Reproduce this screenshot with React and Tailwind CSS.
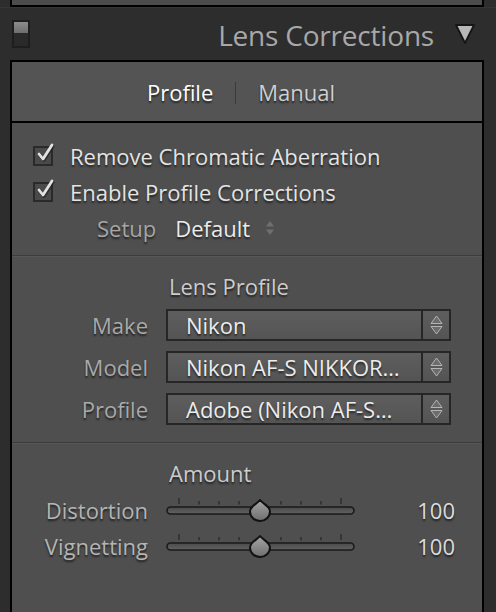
import React from 'react';

const shadow = '[text-shadow:0_2px_2px_rgba(0,0,0,0.6)]';

const Check = () => (
  <div className="relative w-[20px] h-[20px] shrink-0 border-2 border-[#2a2a2a] bg-[#4a4a4a]">
    <svg className="absolute -top-[6px] left-[1px]" width="20" height="22" viewBox="0 0 20 22">
      <path d="M3 12 L7 17 L16 3" fill="none" stroke="#1e1e1e" strokeWidth="3.5" strokeLinecap="round" strokeLinejoin="round" transform="translate(0.8,1.2)" opacity="0.6" />
      <path d="M3 12 L7 17 L16 3" fill="none" stroke="#e2e2e2" strokeWidth="2.8" strokeLinecap="round" strokeLinejoin="round" />
    </svg>
  </div>
);

const Arrows = () => (
  <svg width="13" height="20" viewBox="0 0 13 20">
    <path d="M6.5 1 L12 8.5 L1 8.5 Z" fill="#6c6c6c" stroke="#b4b4b4" strokeWidth="1" strokeLinejoin="round" />
    <path d="M1 11.5 L12 11.5 L6.5 19 Z" fill="#6c6c6c" stroke="#b4b4b4" strokeWidth="1" strokeLinejoin="round" />
  </svg>
);

const Select = ({ label, value }) => (
  <div className="flex items-center h-[42px]">
    <div className={`w-[136px] text-right text-[22px] text-[#a9a9a9] ${shadow}`}>{label}</div>
    <div className="ml-[18px] w-[285px] h-[32px] flex border-2 border-[#262626] bg-gradient-to-b from-[#5e5e5e] to-[#545454]">
      <div className={`flex-1 pl-[18px] flex items-center text-[22px] text-[#ececec] ${shadow} whitespace-nowrap overflow-hidden`}>{value}</div>
      <div className="w-[28px] border-l-2 border-[#262626] flex items-center justify-center">
        <Arrows />
      </div>
    </div>
  </div>
);

const ticks = [13, 33, 53, 73, 115, 135, 155, 175];

const Slider = ({ label, value }) => (
  <div className="flex items-center h-[36px]">
    <div className={`w-[136px] text-right text-[22px] text-[#b4b4b4] ${shadow}`}>{label}</div>
    <svg className="ml-[18px] shrink-0" width="190" height="30" viewBox="0 0 190 30">
      {ticks.map((x) => (
        <rect key={x} x={x - 0.75} y={x === 13 || x === 175 ? 3 : 6} width="1.5" height={x === 13 || x === 175 ? 6 : 3.5} fill="#2e2e2e" />
      ))}
      <defs>
        <linearGradient id="trk" x1="0" y1="0" x2="0" y2="1">
          <stop offset="0" stopColor="#4a4a4a" />
          <stop offset="1" stopColor="#626262" />
        </linearGradient>
        <linearGradient id="thb" x1="0" y1="0" x2="0" y2="1">
          <stop offset="0" stopColor="#a6a6a6" />
          <stop offset="1" stopColor="#6e6e6e" />
        </linearGradient>
      </defs>
      <rect x="1" y="12" width="187" height="7" rx="3.5" fill="url(#trk)" stroke="#1a1a1a" strokeWidth="1.6" />
      <path d="M94 5 C97 9 104 11 104 16.5 A10 9.5 0 0 1 84 16.5 C84 11 91 9 94 5 Z" fill="url(#thb)" stroke="#111" strokeWidth="2" strokeLinejoin="round" />
    </svg>
    <div className={`flex-1 text-right pr-[27px] text-[22px] text-[#dcdcdc] ${shadow}`}>{value}</div>
  </div>
);

const Divider = () => (
  <div>
    <div className="h-[1px] bg-[#3c3c3c]" />
    <div className="h-[1px] bg-[#575757]" />
  </div>
);

export default function App() {
  return (
    <div className="w-[496px] h-[612px] overflow-hidden bg-[#2d2d2d] font-['Open_Sans',sans-serif]">
      <div className="mx-[10px] w-[474px] h-[7px] bg-[#4c4c4c] border-x-2 border-b-2 border-black" />
      <div className="h-[1px] bg-[#363636]" />
      <div className="h-[52px] flex items-center pl-[12px] pr-[20px]">
        <div className="w-[18px] h-[28px] border-2 border-[#1e1e1e] bg-[#2a2a2a] flex flex-col">
          <div className="h-[11px] bg-gradient-to-b from-[#8c8c8c] to-[#6e6e6e]" />
        </div>
        <div className="ml-auto pt-[2px] text-[28px] text-[#a8a8a8] tracking-[-0.2px]">Lens Corrections</div>
        <svg className="ml-[20px]" width="22" height="22" viewBox="0 0 22 22">
          <path d="M2 2 L20 2 L11 20 Z" fill="#b8b8b8" stroke="#151515" strokeWidth="1.8" strokeLinejoin="round" />
        </svg>
      </div>
      <div className="mx-[10px] w-[474px] h-[560px] border-x-2 border-t-2 border-black bg-[#4f4f4f]">
        <div className="h-[61px] bg-[#545454] border-b-2 border-black flex items-center justify-center text-[22px]">
          <div className="flex items-center pr-[12px] pt-[2px]">
            <span className={`text-white ${shadow}`}>Profile</span>
            <span className="mx-[22px] w-[1px] h-[22px] bg-[#3a3a3a]" />
            <span className={`text-[#cfcfcf] ${shadow}`}>Manual</span>
          </div>
        </div>
        <div className="pt-[15px]">
          <div className="h-[36px] flex items-center pl-[21px]">
            <Check />
            <span className={`ml-[17px] text-[22px] text-[#e4e4e4] ${shadow}`}>Remove Chromatic Aberration</span>
          </div>
          <div className="h-[36px] flex items-center pl-[21px]">
            <Check />
            <span className={`ml-[17px] text-[22px] text-[#e4e4e4] ${shadow}`}>Enable Profile Corrections</span>
          </div>
          <div className="h-[36px] flex items-center pl-[85px]">
            <span className={`text-[22px] text-[#a6a6a6] ${shadow}`}>Setup</span>
            <span className={`ml-[19px] text-[22px] text-[#ececec] ${shadow}`}>Default</span>
            <svg className="ml-[15px]" width="10" height="16" viewBox="0 0 10 16">
              <path d="M5 1 L9 6.5 L1 6.5 Z" fill="#6f6f6f" />
              <path d="M1 9.5 L9 9.5 L5 15 Z" fill="#6f6f6f" />
            </svg>
          </div>
        </div>
        <div className="mt-[9px]">
          <Divider />
        </div>
        <div className="pt-[14px]">
          <div className={`h-[30px] flex items-center pl-[157px] text-[22px] text-[#cccccc] ${shadow}`}>Lens Profile</div>
          <div className="mt-[3px]">
            <Select label="Make" value="Nikon" />
            <Select label="Model" value="Nikon AF-S NIKKOR…" />
            <Select label="Profile" value="Adobe (Nikon AF-S…" />
          </div>
        </div>
        <div className="mt-[12px]">
          <Divider />
        </div>
        <div className="pt-[14px]">
          <div className={`h-[30px] flex items-center pl-[157px] text-[22px] text-[#cccccc] ${shadow}`}>Amount</div>
          <div className="mt-[4px]">
            <Slider label="Distortion" value="100" />
            <Slider label="Vignetting" value="100" />
          </div>
        </div>
      </div>
    </div>
  );
}
